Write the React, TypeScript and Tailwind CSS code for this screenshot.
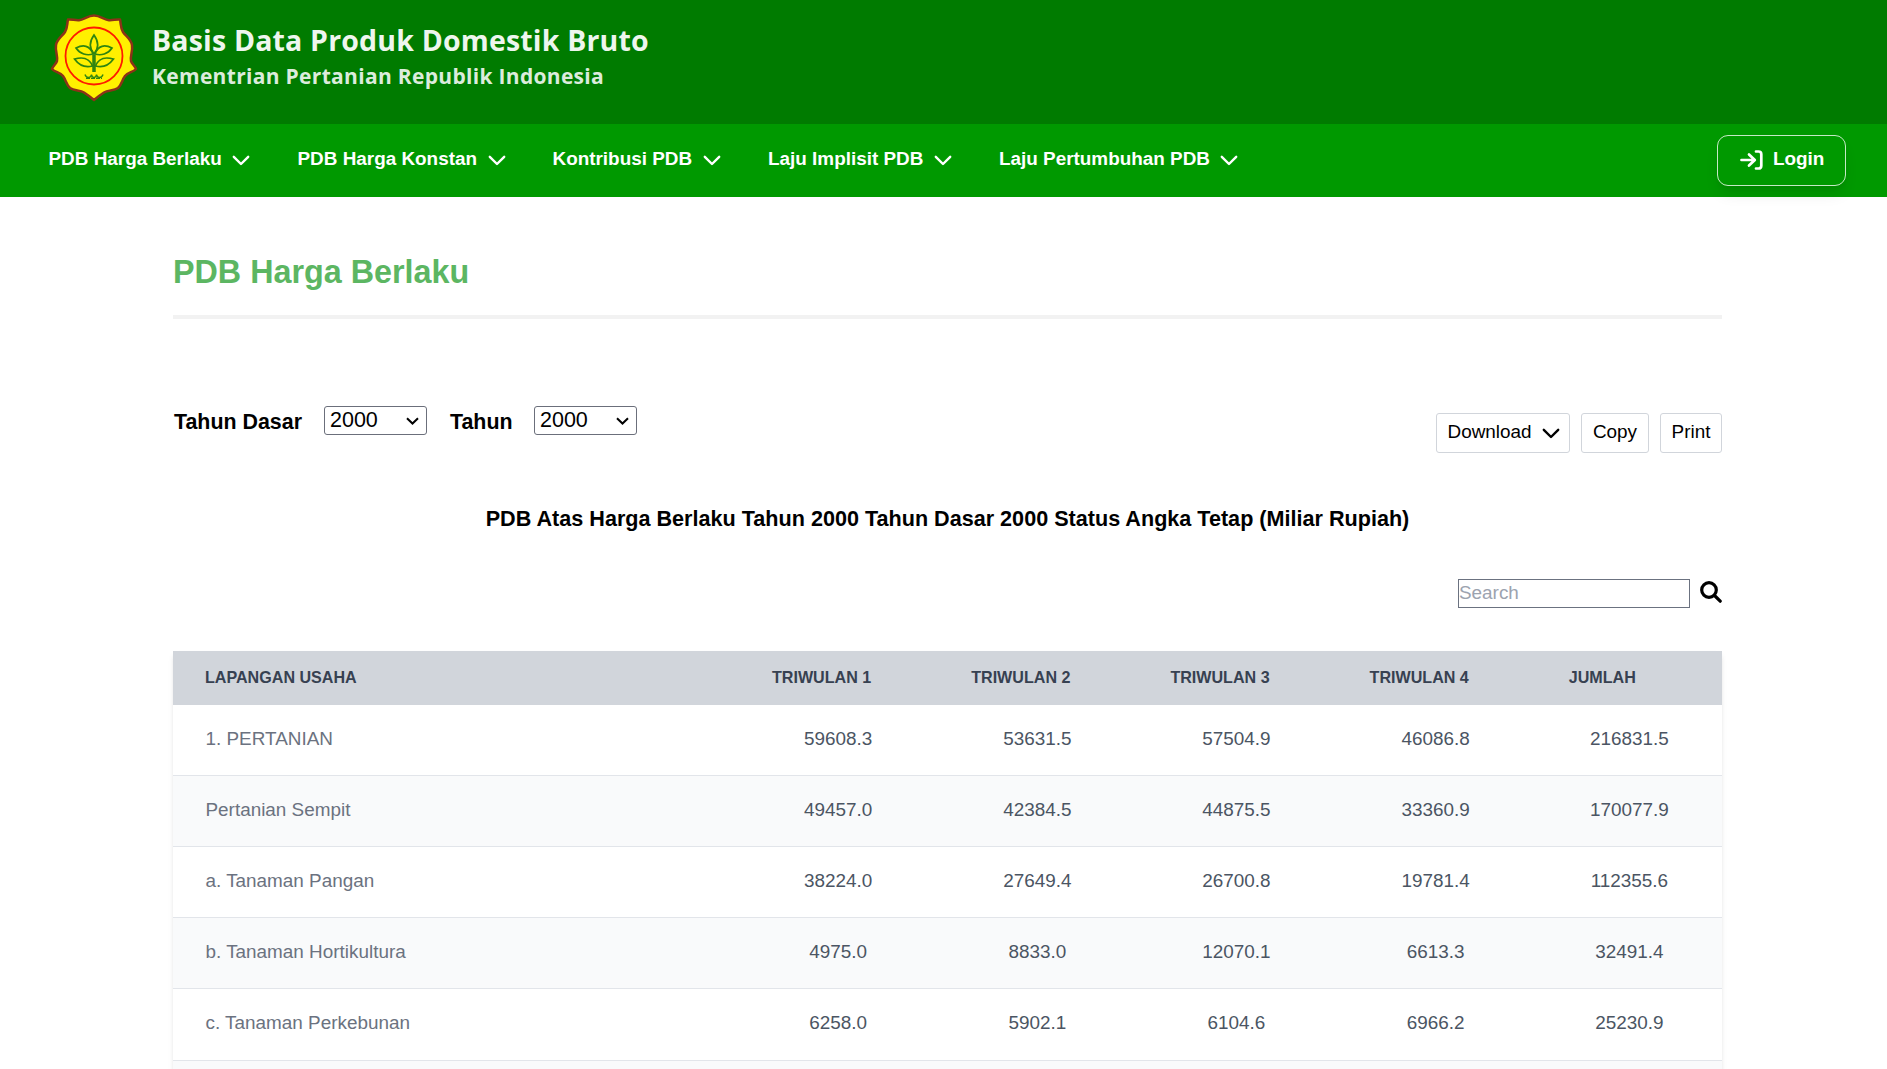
import React from "react";

const menu = [
  { label: "PDB Harga Berlaku", width: "w-[249px]" },
  { label: "PDB Harga Konstan", width: "w-[255px]" },
  { label: "Kontribusi PDB", width: "w-[215.500px]" },
  { label: "Laju Implisit PDB", width: "w-[231px]" },
  { label: "Laju Pertumbuhan PDB", width: "w-[260px]" },
];

const columns = ["Triwulan 1", "Triwulan 2", "Triwulan 3", "Triwulan 4", "Jumlah"];

const rows: [string, string[]][] = [
  ["1. PERTANIAN", ["59608.3", "53631.5", "57504.9", "46086.8", "216831.5"]],
  ["Pertanian Sempit", ["49457.0", "42384.5", "44875.5", "33360.9", "170077.9"]],
  ["a. Tanaman Pangan", ["38224.0", "27649.4", "26700.8", "19781.4", "112355.6"]],
  ["b. Tanaman Hortikultura", ["4975.0", "8833.0", "12070.1", "6613.3", "32491.4"]],
  ["c. Tanaman Perkebunan", ["6258.0", "5902.1", "6104.6", "6966.2", "25230.9"]],
  ["", ["", "", "", "", ""]],
];

function Chevron({ className }: { className: string }) {
  return (
    <svg viewBox="0 0 18 11" fill="none" stroke="currentColor" strokeWidth="2.4" strokeLinecap="round" strokeLinejoin="round" className={className}>
      <path d="M1.800 1.800 9 9 16.200 1.800" />
    </svg>
  );
}

function Logo() {
  return (
    <svg viewBox="0 0 88 90" className="h-[90px] w-[88px] shrink-0">
      <path
        d="M44 2.500C50 2.500 54 6.500 59 7.200C63 7.500 66.500 6 70 6.500C71 11 70.500 15 73 19C76 23.500 81 26 82 32C83 38 80 43 81 48C82 51 85 53 86 56C83 59.500 78 59 75 63C72 67 72 71 68 75C64 78 58 77 54 79.500C50 82 47.500 84 44 87C40.500 84 38 82 34 79.500C30 77 24 78 20 75C16 71 16 67 13 63C10 59 5 59.500 2 56C3 53 6 51 7 48C8 43 5 38 6 32C7 26 12 23.500 15 19C17.500 15 17 11 18 6.500C21.500 6 25 7.500 29 7.200C34 6.500 38 2.500 44 2.500Z"
        fill="#fff000" stroke="#8b3218" strokeWidth="2.500" strokeLinejoin="round"
      />
      <circle cx="44" cy="43" r="28.500" fill="none" stroke="#ff1a00" strokeWidth="1.800" />
      <g fill="none" stroke="#2f8510" strokeWidth="1.700">
        <path d="M44 22C39 29 39 35 44 41C49 35 49 29 44 22Z" />
        <path d="M43 41C40 32 33 31.500 26 35C30 41 37 43 43 41ZM45 41C48 32 55 31.500 62 35C58 41 51 43 45 41Z" />
        <path d="M42.500 53C39 44 32 44 24.500 46C30 53.500 37 54.500 42.500 53ZM45.500 53C49 44 56 44 63.500 46C58 53.500 51 54.500 45.500 53Z" />
        <path d="M44 42V59" strokeWidth="3.500" />
        <path d="M35 61.500q1 3 3.500 3t3 -3q.5 3 2.500 3t2.500 -3q.5 3 3 3t3.500 -3" strokeWidth="1.400" />
        <path d="M36 65.300H52" strokeWidth="1.400" strokeDasharray="4 1" />
      </g>
    </svg>
  );
}

function YearSelect() {
  return (
    <button className="mb-[3px] flex h-[29px] w-[103px] items-center justify-between rounded-[3px] border border-[#6b6f7b] bg-white pr-[7px] pl-[5px] text-[21.500px] leading-[27px]">
      <span>2000</span>
      <svg viewBox="0 0 13 8" fill="none" stroke="currentColor" strokeWidth="2" className="h-[8px] w-[13px]">
        <path d="M1 1.200 6.500 6.500 12 1.200" />
      </svg>
    </button>
  );
}

export default function App() {
  return (
    <div className="h-[1069px] overflow-hidden bg-white font-['Liberation_Sans',Arial,sans-serif] text-[18.900px] text-black">
      <header className="flex h-[124px] bg-[#007b00] pt-[13px] pl-[50px]">
        <Logo />
        <div className="pt-[7px] pl-[14px] font-['Open_Sans',sans-serif] font-bold whitespace-nowrap">
          <div className="text-[28.500px] leading-[40px] tracking-[0.180px] text-[#eef6ee]">Basis Data Produk Domestik Bruto</div>
          <div className="pt-[1px] text-[21px] leading-[31px] tracking-[0.310px] text-[#dcecdc]">Kementrian Pertanian Republik Indonesia</div>
        </div>
      </header>

      <nav className="flex h-[73px] items-start bg-[#009900] pl-[48.500px] font-bold text-white">
        {menu.map((item) => (
          <a key={item.label} className={`flex items-center pt-[21px] leading-[28px] whitespace-nowrap ${item.width}`}>
            {item.label}
            <Chevron className="mt-[3px] ml-[10.500px] h-[11px] w-[18px]" />
          </a>
        ))}
        <button className="mt-[11px] mr-[41px] ml-auto flex h-[51px] w-[129px] items-center rounded-[11px] border border-[#c5e9c5] pb-[2px] pl-[22px] shadow-lg">
          <svg viewBox="0 0 23 20" fill="none" stroke="currentColor" strokeWidth="2.700" strokeLinecap="round" strokeLinejoin="round" className="h-[20px] w-[23px]">
            <path d="M1.500 10H14.500M9 4.500 14.800 10 9 15.500M16 1.500H18.500Q21.300 1.500 21.300 4.300V15.700Q21.300 18.500 18.500 18.500H16" />
          </svg>
          <span className="ml-[10px]">Login</span>
        </button>
      </nav>

      <main className="mr-[165px] ml-[173px]">
        <h1 className="pt-[55px] text-[32.300px] leading-[40px] font-bold text-[#5cb662]">PDB Harga Berlaku</h1>
        <div className="mt-[23px] h-[4px] bg-[#f2f2f2]" />

        <div className="mt-[87px] flex h-[47px] items-start">
          <div className="flex items-center pl-[1px] text-[21.400px] font-bold">
            <span className="w-[150px]">Tahun Dasar</span>
            <div className="font-normal"><YearSelect /></div>
            <span className="ml-[23px] w-[84px]">Tahun</span>
            <div className="font-normal"><YearSelect /></div>
          </div>
          <div className="mt-[7px] ml-auto flex gap-[11px]">
            <button className="flex h-[40px] w-[134px] items-center rounded-[3px] border border-[#d1d5db] pb-[2px] pl-[10.500px]">
              Download
              <Chevron className="mt-[3px] ml-[10px] h-[11px] w-[18px]" />
            </button>
            <button className="h-[40px] w-[68px] rounded-[3px] border border-[#d1d5db] pb-[2px]">Copy</button>
            <button className="h-[40px] w-[62px] rounded-[3px] border border-[#d1d5db] pb-[2px]">Print</button>
          </div>
        </div>

        <h2 className="mt-[50px] text-center text-[21.600px] leading-[32px] font-bold">
          PDB Atas Harga Berlaku Tahun 2000 Tahun Dasar 2000 Status Angka Tetap (Miliar Rupiah)
        </h2>

        <div className="mt-[44px] flex items-start justify-end">
          <input placeholder="Search" className="h-[29px] w-[232px] border border-[#6b7280] pb-[2px] placeholder:text-[#9ca3af]" />
          <svg viewBox="0 0 22 22" fill="none" stroke="currentColor" strokeWidth="3.200" strokeLinecap="round" className="mt-[1.500px] ml-[10px] h-[22px] w-[22px]">
            <circle cx="9" cy="9" r="7.300" />
            <path d="M14.500 14.500 20.200 20.200" />
          </svg>
        </div>

        <table className="mt-[43px] w-full table-fixed border-separate border-spacing-0 shadow-md">
          <colgroup>
            <col className="w-[564px]" />
            <col className="w-[199.200px]" />
            <col className="w-[199.200px]" />
            <col className="w-[199.200px]" />
            <col className="w-[199.200px]" />
            <col />
          </colgroup>
          <thead>
            <tr className="h-[54px] bg-[#d1d5db] text-left text-[16.100px] text-[#374151] uppercase">
              <th className="pb-[2px] pl-[32px]">Lapangan Usaha</th>
              {columns.map((name) => (
                <th key={name} className="pb-[2px] pl-[35px]">{name}</th>
              ))}
            </tr>
          </thead>
          <tbody>
            {rows.map(([name, values], index) => (
              <tr key={index} className="h-[71px] bg-white nth-[5]:h-[72px] even:bg-[#f9fafb]">
                <td className="border-b border-[#e2e5ea] pb-[2px] pl-[32.500px] text-[#6b7280]">{name}</td>
                {values.map((value, column) => (
                  <td key={column} className="border-b border-[#e2e5ea] pb-[2px] pl-[3px] text-center text-[#4b5563]">{value}</td>
                ))}
              </tr>
            ))}
          </tbody>
        </table>
      </main>
    </div>
  );
}
